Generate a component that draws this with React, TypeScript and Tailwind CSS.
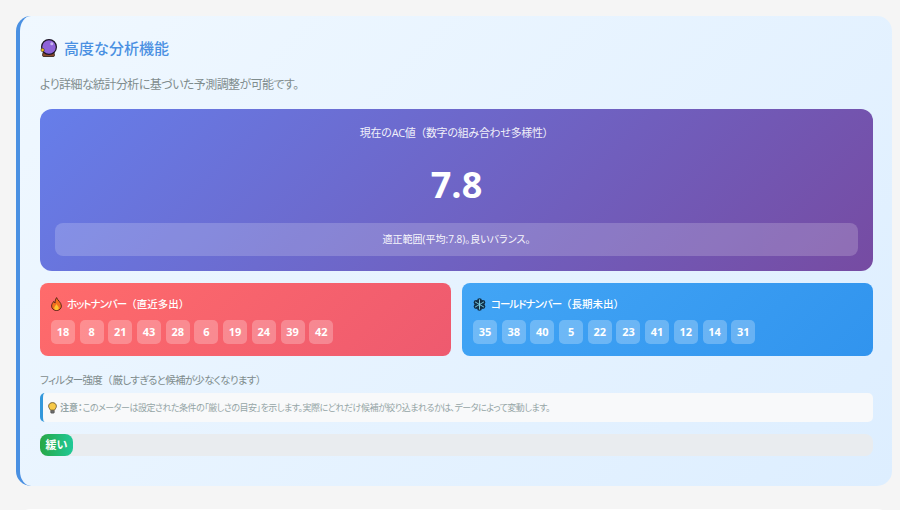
const hotNumbers = [18, 8, 21, 43, 28, 6, 19, 24, 39, 42];
const coldNumbers = [35, 38, 40, 5, 22, 23, 41, 12, 14, 31];

const fontStack = "font-['Open_Sans','Noto_Sans_CJK_JP',sans-serif]";
// kana in the reference is set much narrower than the kanji next to it
const narrow = "[font-feature-settings:'palt']";

function CrystalBall() {
  return (
    <svg width="17" height="18" viewBox="0 0 17 18" className="shrink-0">
      <path d="M3 13.5 L14 13.5 L14.5 16.5 Q14.5 17.5 13 17.5 L4 17.5 Q2.5 17.5 2.5 16.5 Z" fill="#8a4b2c" stroke="#2b1a12" strokeWidth="0.8" />
      <circle cx="9" cy="8" r="7.4" fill="#8e63d8" stroke="#1d1626" strokeWidth="1.2" />
      <circle cx="11.8" cy="4.8" r="1.5" fill="#c7b4f0" />
      <circle cx="2.6" cy="11" r="1.7" fill="#f5c518" stroke="#1d1626" strokeWidth="0.5" />
    </svg>
  );
}

function Flame() {
  return (
    <svg width="11" height="14" viewBox="0 0 11 14" className="shrink-0">
      <path d="M5.6 0.6 C6.2 3 10.4 5.4 10.4 9 C10.4 11.8 8.2 13.5 5.5 13.5 C2.8 13.5 0.6 11.8 0.6 9 C0.6 6.8 2 5.6 2.7 4.4 C3.2 5.4 3.6 5.8 4.1 6 C4 4 4.6 2 5.6 0.6 Z" fill="#f4701f" stroke="#3a1a10" strokeWidth="0.8" />
      <path d="M5.5 7 C6 8.4 7.8 9.4 7.8 11 C7.8 12.4 6.8 13 5.5 13 C4.2 13 3.2 12.4 3.2 11 C3.2 9.4 5 8.4 5.5 7 Z" fill="#fbc531" />
    </svg>
  );
}

function Snowflake() {
  return (
    <svg width="13" height="13" viewBox="0 0 13 13" className="shrink-0">
      <g fill="#123047">
        <circle cx="6.5" cy="2.6" r="2.4" />
        <circle cx="6.5" cy="10.4" r="2.4" />
        <circle cx="3.1" cy="4.5" r="2.4" />
        <circle cx="9.9" cy="4.5" r="2.4" />
        <circle cx="3.1" cy="8.5" r="2.4" />
        <circle cx="9.9" cy="8.5" r="2.4" />
        <circle cx="6.5" cy="6.5" r="2.4" />
      </g>
      <g stroke="#7fd4ea" strokeWidth="0.9" strokeLinecap="round">
        <path d="M6.5 1.8 V11.2" />
        <path d="M2.4 4.1 L10.6 8.9" />
        <path d="M2.4 8.9 L10.6 4.1" />
      </g>
    </svg>
  );
}

function Bulb() {
  return (
    <svg width="9" height="12" viewBox="0 0 9 12" className="shrink-0">
      <path d="M4.5 0.6 C6.8 0.6 8.4 2.2 8.4 4.2 C8.4 5.8 7.2 6.6 6.6 8.2 L2.4 8.2 C1.8 6.6 0.6 5.8 0.6 4.2 C0.6 2.2 2.2 0.6 4.5 0.6 Z" fill="#f7c948" stroke="#4a3a1c" strokeWidth="0.7" />
      <rect x="2.6" y="8.4" width="3.8" height="2.8" rx="1" fill="#6b6b6b" stroke="#3a3a3a" strokeWidth="0.4" />
    </svg>
  );
}

function NumberCard({
  kana,
  rest,
  icon,
  numbers,
  className,
}: {
  kana: string;
  rest: string;
  icon: React.ReactNode;
  numbers: number[];
  className: string;
}) {
  return (
    <div className={`rounded-[8px] px-[11px] pt-[13px] pb-3 text-white ${className}`}>
      <div className="flex h-4 items-center gap-[5px] text-[10.5px] font-medium leading-4">
        {icon}
        <span>
          <span className={`${narrow} tracking-[-1px]`}>{kana}</span>
          {rest}
        </span>
      </div>
      <div className="mt-[8px] flex gap-[4.7px]">
        {numbers.map((n) => (
          <span
            key={n}
            className="flex h-6 w-6 items-center justify-center rounded-[5px] bg-white/25 text-[11px] font-bold"
          >
            {n}
          </span>
        ))}
      </div>
    </div>
  );
}

export default function App() {
  return (
    <div className={`h-[510px] overflow-hidden bg-[#f5f5f5] pt-4 pr-2 pl-4 ${fontStack}`}>
      <section className="h-[470px] rounded-[15px] border-l-4 border-[#4a90e2] bg-[linear-gradient(135deg,#f0f8ff,#ddeeff)] pt-[21px] pr-[19px] pl-5">
        <h2 className="flex h-[22px] items-center gap-[7px] text-[15px] font-medium text-[#4a90e2]">
          <CrystalBall />
          <span>高度な分析機能</span>
        </h2>
        <p className={`mt-[16px] text-[12px] leading-5 tracking-[-0.58px] text-[#7f8c8d] ${narrow}`}>
          より詳細な統計分析に基づいた予測調整が可能です。
        </p>

        <div className="mt-[14px] h-[162px] rounded-xl bg-[linear-gradient(135deg,#667eea,#764ba2)] px-[15px] pt-[15px] text-center text-white">
          <div className="text-[11px] leading-[18px] tracking-[-0.4px] opacity-90">
            現在のAC値（数字の組み合わせ多様性）
          </div>
          <div className="mt-[18px] text-[36px] font-bold leading-[50px]">7.8</div>
          <div className={`mt-[13px] flex h-[33px] items-center justify-center rounded-lg bg-white/20 text-[10px] opacity-95 ${narrow}`}>
            適正範囲(平均:7.8)。良いバランス。
          </div>
        </div>

        <div className="mt-3 grid grid-cols-2 gap-[11px]">
          <NumberCard
            kana="ホットナンバー"
            rest="（直近多出）"
            icon={<Flame />}
            numbers={hotNumbers}
            className="bg-[linear-gradient(135deg,#ff6b6b,#ee5a6f)]"
          />
          <NumberCard
            kana="コールドナンバー"
            rest="（長期未出）"
            icon={<Snowflake />}
            numbers={coldNumbers}
            className="bg-[linear-gradient(135deg,#42a5f5,#3194ee)]"
          />
        </div>

        <div className="mt-[16px] text-[10.5px] leading-4 text-[#7f8c8d]">
          <span className={`${narrow} tracking-[-0.7px]`}>フィルター強度</span>（
          <span className={`${narrow} tracking-[-0.7px]`}>厳しすぎると候補が少なくなります</span>）
        </div>

        <div className={`mt-[5px] flex h-[29px] items-center gap-[3px] rounded-[5px] border-l-[3px] border-[#3498db] bg-[#f8f9fa] pl-[5px] text-[9px] tracking-[-0.5px] text-[#95a5a6] ${narrow}`}>
          <Bulb />
          <span>
            <span className="font-semibold tracking-normal">注意：</span>
            このメーターは設定された条件の「厳しさの目安」を示します。実際にどれだけ候補が絞り込まれるかは、データによって変動します。
          </span>
        </div>

        <div className="mt-3 h-[22px] rounded-[8px] bg-[#e9ecef]">
          <div className="flex h-full w-[33px] items-center justify-center rounded-[8px] bg-[linear-gradient(90deg,#28a745,#20c997)] text-[11px] font-bold text-white">
            緩い
          </div>
        </div>
      </section>
      <div className="mt-[23px] h-4 rounded-t-[15px] bg-white" />
    </div>
  );
}
